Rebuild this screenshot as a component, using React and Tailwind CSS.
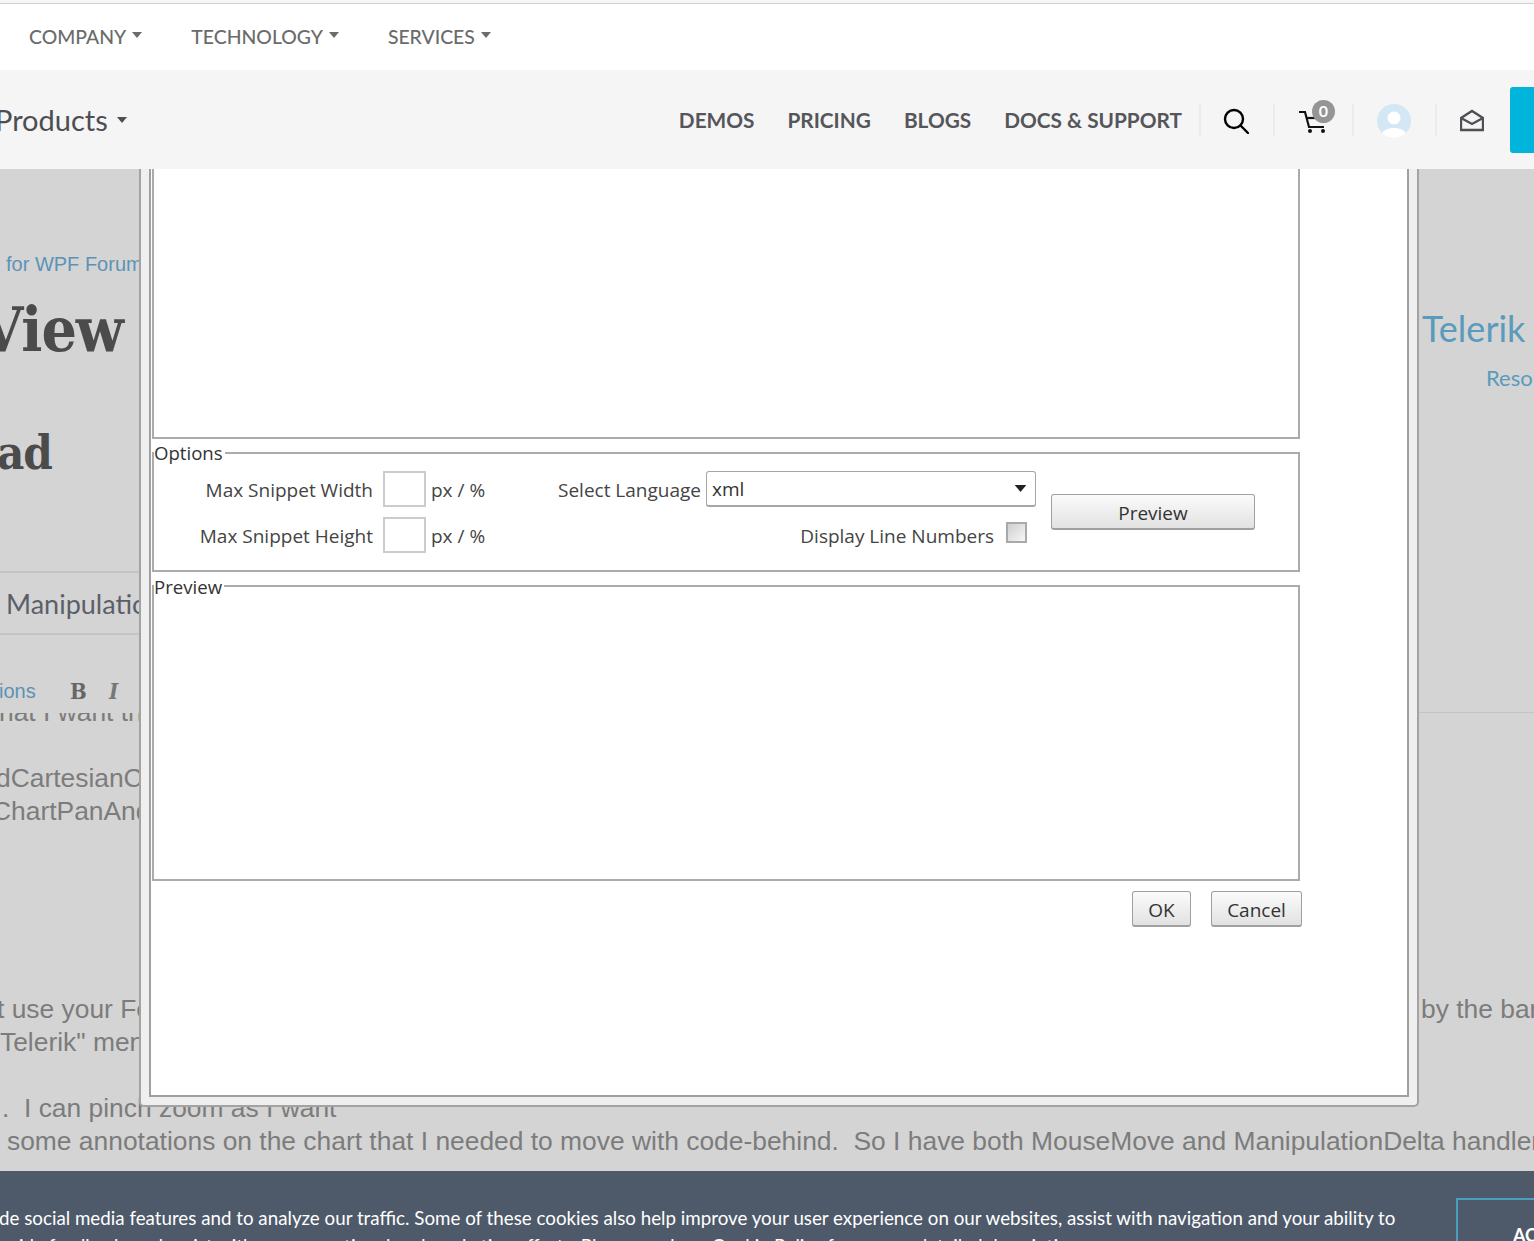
import React from "react";

const metric = "font-['Lato','Noto_Sans',sans-serif]";
const segoe = "font-['Open_Sans','Noto_Sans',sans-serif]";
const arial = "font-['Liberation_Sans',Arial,sans-serif]";
const slab = "font-['DejaVu_Serif_Condensed','DejaVu_Serif',serif]";

function Caret({ className = "" }) {
  return (
    <svg width="10" height="6" viewBox="0 0 10 6" className={className}>
      <path d="M0 0h10L5 6z" fill="currentColor" />
    </svg>
  );
}

function TopLink({ label }) {
  return (
    <div className="flex items-center gap-[6px]">
      <span>{label}</span>
      <Caret className="mb-[4px]" />
    </div>
  );
}

function Divider() {
  return <div className="w-[2px] h-[32px] bg-[#ebebeb]" />;
}

function Header() {
  return (
    <header className={`${metric} relative z-20`}>
      <div className="h-[4px] bg-[#f6f6f6] border-b border-[#cfcfcf]" />
      <div className="h-[66px] bg-white flex items-center pl-[29px] gap-[49px] text-[19.4px] font-medium text-[#6b6b6b]">
        <TopLink label="COMPANY" />
        <TopLink label="TECHNOLOGY" />
        <TopLink label="SERVICES" />
      </div>
      <div className="h-[99px] bg-[#f5f5f6] flex items-center overflow-hidden">
        <div className="flex items-center gap-[9px] ml-[-5px] text-[29px] text-[#4d4d52]">
          <span>Products</span>
          <Caret className="text-[#4d4d52]" />
        </div>
        <div className="ml-auto flex items-center">
          <nav className="flex items-center gap-[33px] text-[20.8px] font-bold text-[#55555a] mt-[1px]">
            <span>DEMOS</span>
            <span>PRICING</span>
            <span>BLOGS</span>
            <span>DOCS &amp; SUPPORT</span>
          </nav>
          <div className="ml-[17px]"><Divider /></div>
          <svg className="ml-[22px] mt-[2px]" width="26" height="26" viewBox="0 0 26 26" fill="none" stroke="#000" strokeWidth="2.4">
            <circle cx="11" cy="11" r="9" />
            <path d="M17.5 17.5 L25 25" strokeLinecap="round" />
          </svg>
          <div className="ml-[24px]"><Divider /></div>
          <div className="relative ml-[23px] w-[32px] h-[26px]">
            <svg width="30" height="24" viewBox="0 0 30 24" fill="none" stroke="#111" strokeWidth="2.2" className="mt-[3px]">
              <path d="M1 2h6l4 15h15" />
              <path d="M9 8h17" />
              <circle cx="12" cy="21" r="2" fill="#111" stroke="none" />
              <circle cx="25" cy="21" r="2" fill="#111" stroke="none" />
            </svg>
            <span className="absolute left-[14px] top-[-7px] w-[23px] h-[23px] rounded-full bg-[#959595] text-white text-[16px] font-bold flex items-center justify-center">0</span>
          </div>
          <div className="ml-[22px]"><Divider /></div>
          <svg className="ml-[22px] mt-[3px]" width="36" height="36" viewBox="0 0 36 36">
            <defs>
              <clipPath id="av"><circle cx="18" cy="18" r="17" /></clipPath>
            </defs>
            <circle cx="18" cy="18" r="17" fill="#d3e8f4" />
            <g clipPath="url(#av)">
              <circle cx="18" cy="15" r="6.5" fill="#fff" />
              <path d="M4 36c1-9 8-11 14-11s13 2 14 11z" fill="#fff" />
            </g>
          </svg>
          <div className="ml-[23px]"><Divider /></div>
          <svg className="ml-[23px] mt-[1px]" width="24" height="23" viewBox="0 0 24 23" fill="none" stroke="#4f4f55" strokeWidth="2.4">
            <path d="M1 9 L12 2 L23 9 V21 H1 Z" />
            <path d="M1 9 L12 15 L23 9" />
          </svg>
          <div className="ml-[26px] w-[24px] h-[66px] bg-[#00b4dc] rounded-l-[3px]" />
        </div>
      </div>
    </header>
  );
}

function Background() {
  return (
    <div className={`${arial} flex-1 min-h-0 overflow-hidden bg-[#d4d4d4] text-[#7c7c7c] text-[26.4px] leading-[33px] whitespace-nowrap`}>
      <div className="mt-[83px] h-[28px] text-[20px] text-[#5c93b4] pl-[6px] leading-[24px]">for WPF Forum</div>

      <div className="mt-[15px] h-[100px] flex justify-between overflow-hidden">
        <span className={`${slab} block ml-[-20px] font-bold text-[62px] leading-[70px] text-[#4b4b4b] tracking-[-1px]`}>View</span>
        <div className={`${metric} w-[112px] overflow-hidden text-[#5a9bbd]`}>
          <div className="mt-[9px] text-[36px] leading-[48px]">Telerik</div>
          <div className="mt-[11px] pl-[64px] text-[22px] leading-[30px]">Resources</div>
        </div>
      </div>

      <div className={`${slab} mt-[30px] h-[56px] ml-[-29px] font-bold text-[47px] leading-[56px] text-[#4b4b4b] tracking-[-1px]`}>ead</div>

      <div className="mt-[90px] h-[64px] w-[140px] border-y-2 border-[#c4c4c4] flex items-center pl-[6px] overflow-hidden">
        <span className={`${metric} text-[27px] text-[#5b6068]`}>Manipulation</span>
      </div>

      <div className="mt-[42px] h-[36px] flex justify-between">
        <div className="flex items-start h-[28px] leading-[28px] text-[20px] text-[#5c93b4]">
          <span className="ml-[-1px] w-[71px]">ions</span>
          <span className={`${slab} font-bold text-[22px] text-[#666] w-[39px]`}>B</span>
          <span className={`${slab} font-bold italic text-[22px] text-[#777]`}>I</span>
        </div>
        <div className="w-[115px] self-end border-b border-[#c4c4c4]" />
      </div>

      <div className="h-[12px] overflow-hidden">
        <div className="mt-[-17px] ml-[-1px]">hat I want th</div>
      </div>

      <div className="mt-[37px]">
        <div className="ml-[-4px]">dCartesianChart</div>
        <div className="ml-[-8px]">ChartPanAndZoom</div>
      </div>

      <div className="mt-[165px] flex justify-between">
        <span className="block ml-[-3px]">t use your Forum</span>
        <span className="block w-[113px] overflow-hidden">by the bar</span>
      </div>
      <div>Telerik" menu</div>
      <div className="mt-[33px] pl-[2px]">.&nbsp; I can pinch zoom as I want</div>
      <div className="pl-[7px]">
        some annotations on the chart that I needed to move with code-behind.&nbsp; So I have both MouseMove and ManipulationDelta handlers
      </div>
    </div>
  );
}

function Fieldset({ legend, className = "", legendClass = "top-[-11px]", children }) {
  return (
    <div className={`relative border-2 border-[#ababab] ${className}`}>
      <span className={`absolute left-0 bg-white pr-[2px] leading-[20px] text-[#333] text-[18.6px] ${legendClass}`}>{legend}</span>
      {children}
    </div>
  );
}

function SmallInput() {
  return <div className="w-[43px] h-[36px] border-2 border-[#cccccc] bg-white" />;
}

function GButton({ className = "", children }) {
  return (
    <div className={`flex items-center justify-center pt-[3px] rounded-[3px] border border-[#a0a0a0] border-b-2 bg-gradient-to-b from-[#fbfbfb] to-[#e2e2e2] text-[19px] text-[#333] ${className}`}>
      {children}
    </div>
  );
}

function OptionsForm() {
  return (
    <div className="flex text-[19px] text-[#444] whitespace-nowrap">
      <div className="w-[219px] mt-[17px] flex flex-col gap-[10px] items-end">
        <div className="h-[36px] leading-[38px]">Max Snippet Width</div>
        <div className="h-[36px] leading-[38px]">Max Snippet Height</div>
      </div>
      <div className="ml-[10px] mt-[17px] w-[175px] flex flex-col gap-[10px]">
        <div className="flex items-center gap-[5px]"><SmallInput /><span className="mt-[2px]">px / %</span></div>
        <div className="flex items-center gap-[5px]"><SmallInput /><span className="mt-[2px]">px / %</span></div>
      </div>
      <div className="mt-[17px] w-[478px] flex flex-col gap-[10px]">
        <div className="flex items-center h-[36px]">
          <span className="w-[148px] mt-[2px]">Select Language</span>
          <div className="w-[330px] h-[36px] border border-[#a6a6a6] border-b-2 rounded-[3px] flex items-center justify-between pl-[5px] pr-[8px] text-[#333]">
            <span className="mt-[2px]">xml</span>
            <Caret className="text-[#222] w-[13px] h-[7px]" />
          </div>
        </div>
        <div className="flex items-center justify-end h-[36px] pr-[9px]">
          <span className="mt-[2px]">Display Line Numbers</span>
          <div className="ml-[12px] mb-[5px] w-[21px] h-[21px] border-2 border-[#a9a9a9] bg-gradient-to-br from-[#cfcfcf] to-[#f7f7f7]" />
        </div>
      </div>
      <GButton className="ml-[15px] mt-[40px] w-[204px] h-[36px]">Preview</GButton>
    </div>
  );
}

function Dialog() {
  return (
    <div className={`${segoe} absolute left-[139px] top-[169px] w-[1280px] h-[938px] z-10 bg-[#efefef] border-x-2 border-b-2 border-[#a3a3a3] rounded-b-[5px] px-[8px] pb-[8px]`}>
      <div className="h-full bg-white border-x-2 border-b-2 border-[#a0a0a0] pl-[1px]">
        <div className="w-[1148px] h-[270px] border-x-2 border-b-2 border-[#ababab]" />
        <Fieldset legend="Options" className="mt-[13px] w-[1148px] h-[120px]">
          <OptionsForm />
        </Fieldset>
        <Fieldset legend="Preview" legendClass="top-[-10px]" className="mt-[13px] w-[1148px] h-[296px]" />
        <div className="w-[1150px] mt-[10px] flex justify-end gap-[20px]">
          <GButton className="w-[59px] h-[36px]">OK</GButton>
          <GButton className="w-[91px] h-[36px]">Cancel</GButton>
        </div>
      </div>
    </div>
  );
}

function CookieBar() {
  return (
    <div className={`${metric} h-[70px] shrink-0 overflow-hidden bg-[#4e5a6a] flex text-white`}>
      <div className="mt-[33px] ml-[-1px] w-[1440px] text-[18.75px] leading-[28px] whitespace-nowrap">
        <div>de social media features and to analyze our traffic. Some of these cookies also help improve your user experience on our websites, assist with navigation and your ability to</div>
        <div>ovide feedback, and assist with our promotional and marketing efforts. Please read our Cookie Policy for a more detailed description</div>
      </div>
      <div className="ml-auto mt-[27px] w-[78px] h-[80px] border-2 border-r-0 border-[#4b9cbd] pl-[55px] pt-[22px] font-bold text-[18px] overflow-hidden whitespace-nowrap">ACCEPT</div>
    </div>
  );
}

export default function App() {
  return (
    <div className="relative w-[1534px] h-[1241px] overflow-hidden flex flex-col bg-[#d4d4d4]">
      <Header />
      <Background />
      <CookieBar />
      <Dialog />
    </div>
  );
}
